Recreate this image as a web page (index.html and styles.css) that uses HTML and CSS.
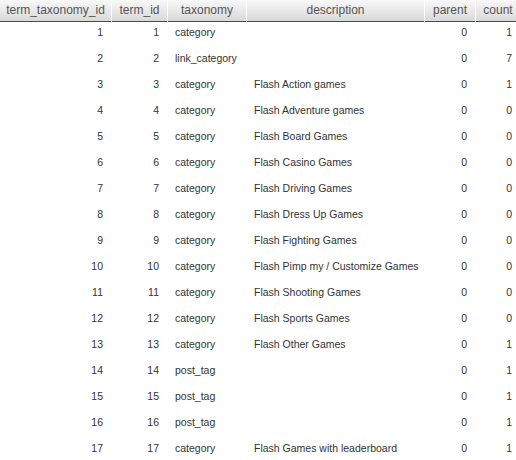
FILE: index.html
```html
<!DOCTYPE html>
<html>
<head>
<meta charset="utf-8">
<link rel="stylesheet" href="styles.css">
</head>
<body>
<table class="grid">
<colgroup>
<col class="c1"><col class="c2"><col class="c3"><col class="c4"><col class="c5"><col class="c6">
</colgroup>
<thead>
<tr><th>term_taxonomy_id</th><th>term_id</th><th>taxonomy</th><th>description</th><th>parent</th><th>count</th></tr>
</thead>
<tbody>
<tr><td class="num">1</td><td class="num">1</td><td>category</td><td></td><td class="num">0</td><td class="num">1</td></tr>
<tr><td class="num">2</td><td class="num">2</td><td>link_category</td><td></td><td class="num">0</td><td class="num">7</td></tr>
<tr><td class="num">3</td><td class="num">3</td><td>category</td><td>Flash Action games</td><td class="num">0</td><td class="num">1</td></tr>
<tr><td class="num">4</td><td class="num">4</td><td>category</td><td>Flash Adventure games</td><td class="num">0</td><td class="num">0</td></tr>
<tr><td class="num">5</td><td class="num">5</td><td>category</td><td>Flash Board Games</td><td class="num">0</td><td class="num">0</td></tr>
<tr><td class="num">6</td><td class="num">6</td><td>category</td><td>Flash Casino Games</td><td class="num">0</td><td class="num">0</td></tr>
<tr><td class="num">7</td><td class="num">7</td><td>category</td><td>Flash Driving Games</td><td class="num">0</td><td class="num">0</td></tr>
<tr><td class="num">8</td><td class="num">8</td><td>category</td><td>Flash Dress Up Games</td><td class="num">0</td><td class="num">0</td></tr>
<tr><td class="num">9</td><td class="num">9</td><td>category</td><td>Flash Fighting Games</td><td class="num">0</td><td class="num">0</td></tr>
<tr><td class="num">10</td><td class="num">10</td><td>category</td><td>Flash Pimp my / Customize Games</td><td class="num">0</td><td class="num">0</td></tr>
<tr><td class="num">11</td><td class="num">11</td><td>category</td><td>Flash Shooting Games</td><td class="num">0</td><td class="num">0</td></tr>
<tr><td class="num">12</td><td class="num">12</td><td>category</td><td>Flash Sports Games</td><td class="num">0</td><td class="num">0</td></tr>
<tr><td class="num">13</td><td class="num">13</td><td>category</td><td>Flash Other Games</td><td class="num">0</td><td class="num">1</td></tr>
<tr><td class="num">14</td><td class="num">14</td><td>post_tag</td><td></td><td class="num">0</td><td class="num">1</td></tr>
<tr><td class="num">15</td><td class="num">15</td><td>post_tag</td><td></td><td class="num">0</td><td class="num">1</td></tr>
<tr><td class="num">16</td><td class="num">16</td><td>post_tag</td><td></td><td class="num">0</td><td class="num">1</td></tr>
<tr><td class="num">17</td><td class="num">17</td><td>category</td><td>Flash Games with leaderboard</td><td class="num">0</td><td class="num">1</td></tr>
</tbody>
</table>
</body>
</html>
```

FILE: styles.css
```css
html, body {
  margin: 0;
  padding: 0;
  background: #fff;
  overflow: hidden;
}
.grid {
  table-layout: fixed;
  border-collapse: separate;
  border-spacing: 1px 0;
  margin-left: -1px;
  width: 522px;
  font-family: "Liberation Sans", Arial, sans-serif;
}
.c1 { width: 111px; }
.c2 { width: 55px; }
.c3 { width: 78px; }
.c4 { width: 177px; }
.c5 { width: 50px; }
.c6 { width: 44px; }
.grid th {
  height: 21px;
  padding: 0;
  font-size: 12px;
  line-height: 21px;
  font-weight: normal;
  color: #555;
  text-align: center;
  white-space: nowrap;
  background: linear-gradient(#f8f8f8, #d9d9d9);
  border-bottom: 1px solid #4a4a4a;
  overflow: hidden;
}
.grid td {
  padding: 4px 7px 9px 7px;
  font-size: 10.5px;
  line-height: 13px;
  color: #333;
  white-space: nowrap;
  text-align: left;
}
.grid td.num {
  text-align: right;
  padding-right: 8px;
}
```
